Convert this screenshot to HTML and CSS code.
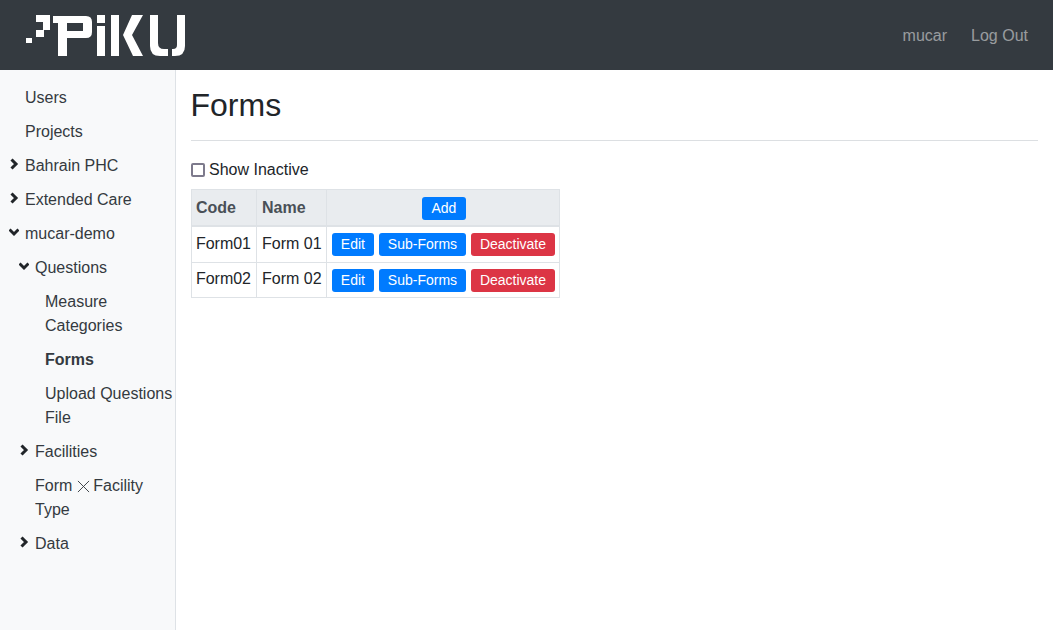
FILE: index.html
```html
<!DOCTYPE html>
<html lang="en">
<head>
<meta charset="utf-8">
<title>Forms</title>
<link rel="stylesheet" href="styles.css">
</head>
<body>
<header class="navbar">
  <svg class="logo" width="160" height="42" viewBox="0 0 160 42" fill="#fff">
    <rect x="10" y="0" width="14" height="7"/>
    <rect x="17" y="7" width="7" height="8"/>
    <rect x="10" y="15" width="8" height="7"/>
    <rect x="0" y="23" width="6" height="5"/>
    <path fill-rule="evenodd" d="M27 1H60Q66 1 66 7V17Q66 23 60 23H41V41H32V8H27ZM41 8V16H57V8Z"/>
    <rect x="71" y="0" width="8" height="8"/>
    <rect x="71" y="11" width="8" height="30"/>
    <rect x="85" y="0" width="8" height="41"/>
    <path d="M106 0H117L106 20L117 41H107L97 20Z"/>
    <path d="M124 0H132V28Q132 34 138 34H142V41H134Q124 41 124 31Z"/>
    <path d="M151 0H159V31Q159 41 149 41H146V34H147Q151 34 151 30Z"/>
  </svg>
  <nav class="nav-right">
    <a class="nav-link">mucar</a>
    <a class="nav-link">Log Out</a>
  </nav>
</header>
<div class="layout">
  <aside class="sidebar">
    <ul class="tree">
      <li class="item"><span class="label">Users</span></li>
      <li class="item"><span class="label">Projects</span></li>
      <li class="item"><svg class="chev" viewBox="0 0 10 12"><path d="M2.5 1.5l4.5 4.5-4.5 4.5"/></svg><span class="label">Bahrain PHC</span></li>
      <li class="item"><svg class="chev" viewBox="0 0 10 12"><path d="M2.5 1.5l4.5 4.5-4.5 4.5"/></svg><span class="label">Extended Care</span></li>
      <li class="item"><svg class="chev" viewBox="0 0 10 12"><path d="M.5 3.5l4.5 4.5 4.5-4.5"/></svg><span class="label">mucar-demo</span></li>
      <li class="item lvl1"><svg class="chev" viewBox="0 0 10 12"><path d="M.5 3.5l4.5 4.5 4.5-4.5"/></svg><span class="label">Questions</span></li>
      <li class="item lvl2"><span class="label">Measure Categories</span></li>
      <li class="item lvl2"><span class="label active">Forms</span></li>
      <li class="item lvl2"><span class="label">Upload Questions File</span></li>
      <li class="item lvl1"><svg class="chev" viewBox="0 0 10 12"><path d="M2.5 1.5l4.5 4.5-4.5 4.5"/></svg><span class="label">Facilities</span></li>
      <li class="item lvl1"><span class="label">Form<svg class="times" viewBox="0 0 14 14"><path d="M1 1l12 12M13 1l-12 12"/></svg>Facility Type</span></li>
      <li class="item lvl1"><svg class="chev" viewBox="0 0 10 12"><path d="M2.5 1.5l4.5 4.5-4.5 4.5"/></svg><span class="label">Data</span></li>
    </ul>
  </aside>
  <main class="content">
    <h1 class="title">Forms</h1>
    <hr class="rule">
    <label class="check"><span class="box"></span>Show Inactive</label>
    <table class="table">
      <thead>
        <tr><th class="col-code">Code</th><th class="col-name">Name</th><th class="center"><button class="btn blue">Add</button></th></tr>
      </thead>
      <tbody>
        <tr class="row-one"><td class="col-code">Form01</td><td class="col-name">Form 01</td><td class="actions"><button class="btn blue">Edit</button> <button class="btn blue">Sub-Forms</button> <button class="btn red">Deactivate</button></td></tr>
        <tr class="row-two"><td class="col-code">Form02</td><td class="col-name">Form 02</td><td class="actions"><button class="btn blue">Edit</button> <button class="btn blue">Sub-Forms</button> <button class="btn red">Deactivate</button></td></tr>
      </tbody>
    </table>
  </main>
</div>
</body>
</html>
```
FILE: styles.css
```css
* { box-sizing: border-box; }
html, body { margin: 0; height: 100%; overflow: hidden; }
body { font-family: "Liberation Sans", Arial, sans-serif; font-size: 16px; line-height: 24px; color: #212529; background: #fff; }
.navbar { height: 70px; background: #343a40; display: flex; align-items: center; justify-content: space-between; padding: 1px 13px 0 26px; }
.logo { display: block; margin-top: 1px; }
.nav-right { display: flex; }
.nav-link { color: rgba(255,255,255,.5); padding: 8px 12px; }
.layout { display: flex; height: 560px; }
.sidebar { width: 176px; flex: none; background: #f8f9fa; border-right: 1px solid #dee2e6; padding-top: 11px; }
.tree { list-style: none; margin: 0; padding: 0; }
.item { position: relative; padding: 5px 0 5px 25px; color: #343a40; }
.lvl1 { padding-left: 35px; }
.lvl2 { padding-left: 45px; }
.label { display: block; }
.active { font-weight: 700; }
.chev { position: absolute; width: 10px; height: 12px; left: 9px; top: 9px; fill: none; stroke: #212529; stroke-width: 3; }
.lvl1 .chev { left: 19px; }
.times { width: 13px; height: 13px; margin: 0 3.4px 0 4.5px; vertical-align: -2px; fill: none; stroke: #343a40; stroke-width: 1; }
.content { flex: 1; padding: 16px 15px 0 15px; min-width: 0; }
.title { font-size: 32px; line-height: 38px; font-weight: 500; margin: 0 0 16px -.5px; }
.rule { border: 0; border-top: 1px solid #dcdfe2; margin: 0 0 17px 0; }
.check { display: flex; align-items: center; height: 24px; margin-bottom: 6.5px; }
.box { width: 14px; height: 14px; border: 2px solid #7d7a8c; border-radius: 2px; margin-right: 4px; }
.table { border-collapse: collapse; }
.table th, .table td { border: 1px solid #dee2e6; padding: 4.8px 4.4px; text-align: left; vertical-align: top; }
.table th { background: #e9ecef; color: #495057; border-bottom-width: 2px; height: 37px; padding-top: 6.5px; }
.table .col-code { padding-left: 3.9px; padding-right: 4.9px; }
.table .col-name { padding-left: 5.1px; padding-right: 4.3px; }
.row-two .col-code, .row-two .col-name { padding-top: 4px; }
.table th.center { text-align: center; font-weight: 400; padding: 7px 3.8px 4.8px 5.4px; }
.table td.actions { white-space: nowrap; padding: 4.8px 4.2px 4.8px 4.8px; }
.btn { font: inherit; font-size: 14px; line-height: 21px; padding: 1px 9.2px; border: 0; border-radius: 3px; color: #fff; margin: 1px 0; display: inline-block; vertical-align: top; }
.row-one .btn { margin: 1.4px 0 .6px; }
.table th .btn { margin: 0; }
.blue { background: #007bff; }
.red { background: #dc3545; }
```
